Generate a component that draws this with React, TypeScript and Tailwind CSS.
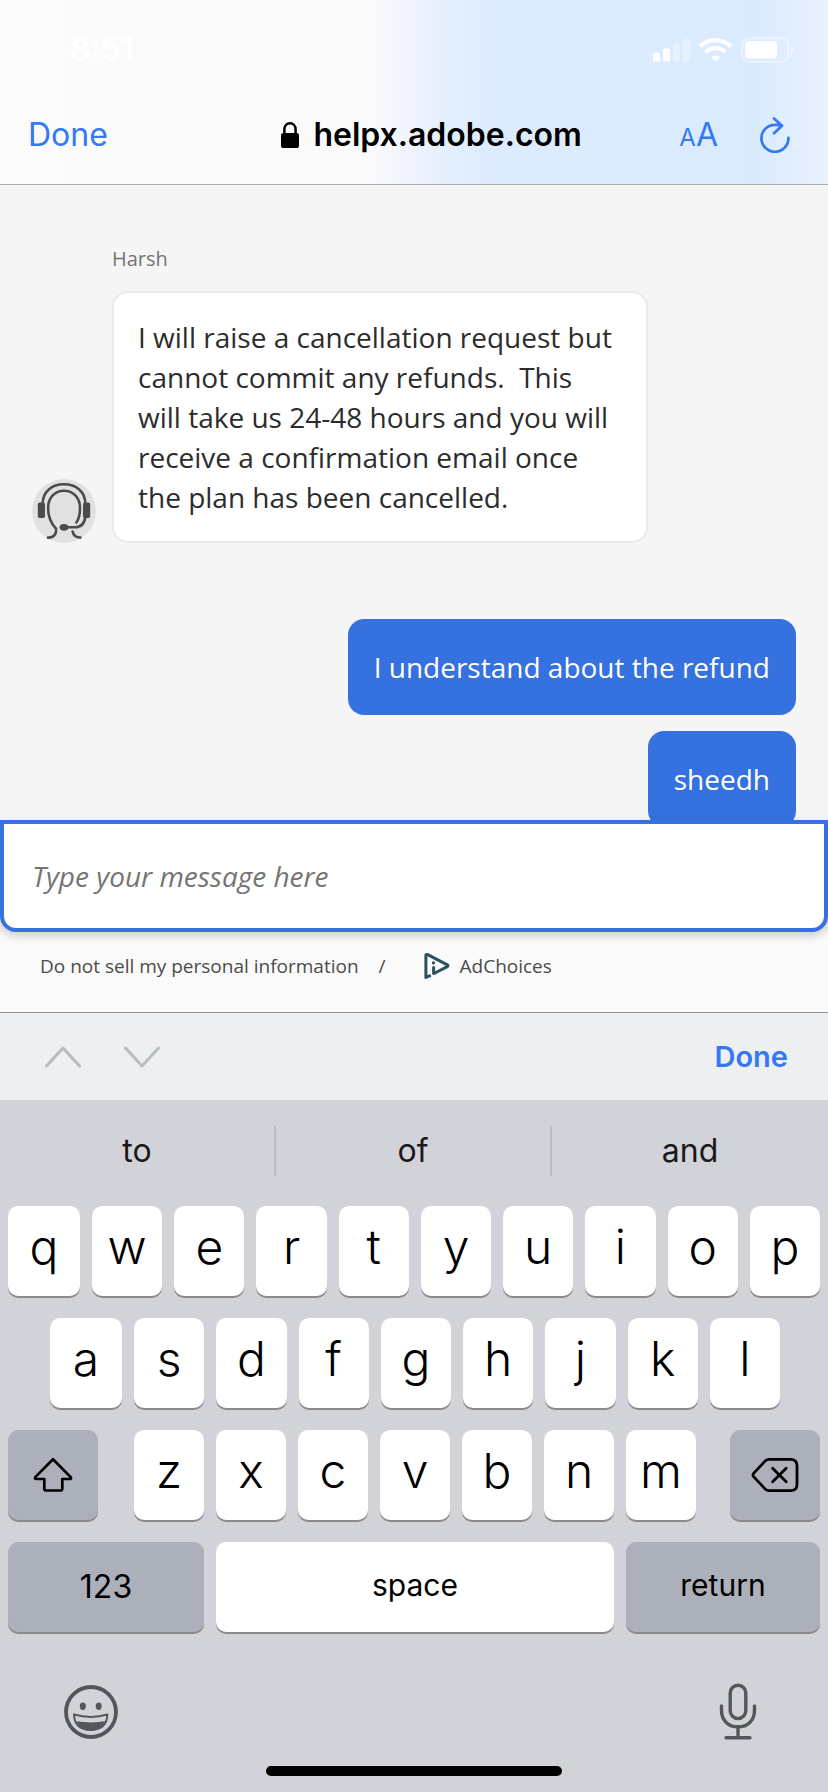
import { useState } from 'react'
import clsx from 'clsx'

// ─── Data ────────────────────────────────────────────────────

const ROW_ONE = ['q', 'w', 'e', 'r', 't', 'y', 'u', 'i', 'o', 'p']
const ROW_TWO = ['a', 's', 'd', 'f', 'g', 'h', 'j', 'k', 'l']
const ROW_THREE = ['z', 'x', 'c', 'v', 'b', 'n', 'm']
const SUGGESTIONS = ['to', 'of', 'and']
const SENT_MESSAGES = ['I understand about the refund', 'sheedh']

// ─── Icons ───────────────────────────────────────────────────

function StatusIcons() {
  return (
    <svg width="142" height="26" viewBox="0 0 142 26" fill="#fff" aria-hidden="true">
      <rect x="0" y="15.5" width="7" height="9" rx="1.6" />
      <rect x="10" y="11.5" width="7" height="13" rx="1.6" />
      <rect x="20" y="6.5" width="7" height="18" rx="1.6" opacity="0.3" />
      <rect x="30" y="1.5" width="7" height="23" rx="1.6" opacity="0.3" />
      <g fill="none" stroke="#fff" strokeWidth="4.4">
        <path d="M47.2 9.4a21.8 21.8 0 0 1 30.6 0" />
        <path d="M52.6 15.2a14 14 0 0 1 19.8 0" />
      </g>
      <path d="M62.5 24.6 58 20.2a6.6 6.6 0 0 1 9 0z" />
      <rect x="89.2" y="1.2" width="46" height="23.6" rx="6.5" fill="none" stroke="#fff" strokeWidth="2" opacity="0.45" />
      <rect x="92" y="4" width="32" height="17.5" rx="3.4" />
      <path d="M138 9.2c1.8.8 2.8 2.2 2.8 3.8s-1 3-2.8 3.8z" opacity="0.5" />
    </svg>
  )
}

function LockIcon() {
  return (
    <svg width="18" height="26" viewBox="0 0 18 26" aria-hidden="true">
      <rect x="0" y="11" width="18" height="15" rx="2.6" />
      <path d="M3.4 12V7.4C3.4 3.8 5.8 1.3 9 1.3s5.6 2.5 5.6 6.1V12" fill="none" stroke="#000" strokeWidth="2.5" />
    </svg>
  )
}

function ReloadIcon() {
  return (
    <svg width="30" height="36" viewBox="0 0 30 36" fill="none" stroke="#3478f6" strokeWidth="2.7" strokeLinecap="round" strokeLinejoin="round" aria-hidden="true">
      <path d="M21.6 8.6C19.6 7.9 17.4 7.7 14.8 7.8A13.5 13.5 0 1 0 28.4 20.8" />
      <path d="m14 1.5 8 7.2-8 7.5" />
    </svg>
  )
}

function AgentAvatar() {
  return (
    <svg className="shrink-0" width="64" height="64" viewBox="0 0 64 64" aria-label="Agent" role="img">
      <circle cx="32" cy="32" r="32" fill="#e1e1e1" />
      <g fill="none" stroke="#4b4b4b" strokeWidth="2.6" strokeLinecap="round">
        <path d="M10.6 25C10.6 12.5 20 5.3 32 5.3S53.4 12.5 53.4 25" />
        <path d="M16 58.6c6 .2 8.6-3.6 8-9-5.6-6-7.9-12.6-7.9-20.4C16.1 18.5 23 11.7 32 11.7s16 6.8 16 17.5c0 6-1 10.6-3.6 14.2" />
        <path d="M53.4 37.5c-.8 7-4.2 10.7-10.4 10.7H32" />
        <path d="M40.6 52.6c.8 4 3.4 6 7.8 6" />
      </g>
      <rect x="5.8" y="23.6" width="7.2" height="15.4" rx="1.8" fill="#4b4b4b" />
      <rect x="51" y="23.6" width="7.2" height="15.4" rx="1.8" fill="#4b4b4b" />
      <ellipse cx="32" cy="48.3" rx="4.4" ry="3.4" fill="#4b4b4b" />
    </svg>
  )
}

function AdChoicesIcon() {
  return (
    <svg width="26" height="26" viewBox="0 0 26 26" fill="none" stroke="#28535f" strokeWidth="3" strokeLinejoin="round" strokeLinecap="round" aria-hidden="true">
      <path d="M5.6 22.8 1.9 24.5V1.9q1-.8 2.4 0l19 9.9q1.4.9 0 1.8L10 20.5" />
      <path d="M9.6 14.5V20" />
      <circle cx="9.4" cy="9.9" r="1.6" fill="#28535f" stroke="none" />
    </svg>
  )
}

function ChevronIcon({ down }: { down?: boolean }) {
  return (
    <svg width="38" height="22" viewBox="0 0 38 22" fill="none" stroke="#b9bbbc" strokeWidth="3" strokeLinecap="round" strokeLinejoin="round" aria-hidden="true">
      <path d={down ? 'M2.5 2 19 20 35.5 2' : 'M2.5 20 19 2l16.5 18'} />
    </svg>
  )
}

function ShiftIcon() {
  return (
    <svg width="40" height="36" viewBox="0 0 40 36" fill="none" stroke="#000" strokeWidth="2.7" strokeLinejoin="round" aria-hidden="true">
      <path d="M20 2.2 37.7 20.1q1 1.9-1 1.9h-7.4v9.5q0 2-2 2H13.3q-2 0-2-2V22H3.5q-2.2 0-1.2-1.9z" />
    </svg>
  )
}

function BackspaceIcon() {
  return (
    <svg width="48" height="36" viewBox="0 0 48 36" fill="none" stroke="#000" strokeWidth="2.8" strokeLinecap="round" strokeLinejoin="round" aria-hidden="true">
      <path d="M18 2.3h21.5q6.5 0 6.5 6.2v19q0 6.2-6.5 6.2H18q-2.200 0-3.800-1.600L2.600 19.600q-1.300-1.600 0-3.200L14.200 3.900Q15.800 2.300 18 2.300z" />
      <path d="m21.600 11.300 13.600 13.400m0-13.400L21.600 24.700" />
    </svg>
  )
}

function SmileyIcon() {
  return (
    <svg width="54" height="54" viewBox="0 0 54 54" aria-hidden="true">
      <circle cx="27" cy="27" r="25" fill="none" stroke="#54565b" strokeWidth="3.8" />
      <ellipse cx="18.8" cy="21.2" rx="3" ry="3.7" fill="#54565b" />
      <ellipse cx="34.7" cy="21.2" rx="3" ry="3.7" fill="#54565b" />
      <path d="M10 29.5q17 4.8 33.4 0-.6 15.2-16.7 15.6Q10.6 44.7 10 29.5z" fill="none" stroke="#54565b" strokeWidth="2" strokeLinejoin="round" />
      <path d="M12.300 36.300q14.400 2.200 28.800 0-3.600 8.800-14.400 8.800T12.300 36.300z" fill="#54565b" />
    </svg>
  )
}

function MicIcon() {
  return (
    <svg width="38" height="58" viewBox="0 0 38 58" fill="none" stroke="#54565b" strokeWidth="3.4" strokeLinecap="round" aria-hidden="true">
      <rect x="11.2" y="2.2" width="15.6" height="33.4" rx="7.8" />
      <path d="M2.5 23v4.5C2.5 37.5 9.5 43.800 19 43.800s16.500-6.300 16.500-16.300V23" />
      <path d="M19 44v10.800M7 54.800h24" />
    </svg>
  )
}

// ─── Keyboard ────────────────────────────────────────────────

interface KeyProps {
  children: React.ReactNode
  className?: string
  dark?: boolean
  label?: string
  onPress?: () => void
}

function Key({ children, className, dark, label, onPress }: KeyProps) {
  return (
    <button
      type="button"
      aria-label={label}
      onClick={onPress}
      className={clsx(
        'flex h-[90px] items-center justify-center rounded-[10px] text-black shadow-[0_2px_0_#898a8e]',
        dark ? 'bg-[#abb0bb]' : 'bg-white',
        className
      )}
    >
      {children}
    </button>
  )
}

function LetterKeys({ letters, onType }: { letters: string[]; onType: (s: string) => void }) {
  return (
    <>
      {letters.map((letter) => (
        <Key key={letter} className="min-w-0 flex-1 pb-2 text-[48px] font-light" onPress={() => onType(letter)}>
          {letter}
        </Key>
      ))}
    </>
  )
}

// ─── Page ────────────────────────────────────────────────────

export default function App() {
  const [message, setMessage] = useState('')

  function type(text: string) {
    setMessage((m) => m + text)
  }

  return (
    <div className="flex h-screen flex-col bg-[#f5f5f5] font-['Inter',sans-serif]">
      <header className="border-b border-[#a9abae] bg-[linear-gradient(90deg,#fbfbfb_0%,#fafafa_44%,#eff4fe_50%,#e2effe_54%,#dcebfe_60%,#dbebfe_92%,#e8f1fe_100%)]">
        <div className="flex h-[100px] items-center justify-between pl-[70px] pr-[33px]">
          <span className="text-[32px] font-semibold text-white">8:51</span>
          <StatusIcons />
        </div>
        <div className="flex h-[84px] items-center pb-[14px] pl-7 pr-[38px]">
          <button type="button" className="text-[32px] text-[#3478f6]">
            Done
          </button>
          <div className="flex flex-1 items-center justify-center gap-[14px] pl-[76px]">
            <LockIcon />
            <span className="text-[32px] font-semibold text-black">helpx.adobe.com</span>
          </div>
          <button type="button" aria-label="Text size" className="mr-[42px] text-[#3478f6]">
            <span className="text-[24px]">A</span>
            <span className="text-[32px]">A</span>
          </button>
          <button type="button" aria-label="Reload">
            <ReloadIcon />
          </button>
        </div>
      </header>

      {/* Conversation */}
      <main className="min-h-0 flex-1 overflow-hidden px-8 pt-[58px] font-['Open_Sans',sans-serif] text-[28px] leading-10">
        <p className="mb-4 pl-20 text-[20px] leading-8 text-[#747474]">Harsh</p>
        <div className="flex items-end gap-4">
          <AgentAvatar />
          <p className="w-[536px] whitespace-pre-wrap rounded-2xl border-2 border-[#eaeaea] bg-white p-6 text-[#2c2c2c]">
            {'I will raise a cancellation request but cannot commit any refunds.  This will take us 24-48 hours and you will receive a confirmation email once the plan has been cancelled.'}
          </p>
        </div>
        <div className="mt-[76px] flex flex-col items-end gap-4">
          {SENT_MESSAGES.map((text) => (
            <p key={text} className="rounded-2xl bg-[#3571df] px-[26px] py-7 text-white">
              {text}
            </p>
          ))}
        </div>
      </main>

      <input
        type="text"
        aria-label="Message"
        placeholder="Type your message here"
        value={message}
        onChange={(e) => setMessage(e.target.value)}
        className="relative h-28 w-full shrink-0 rounded-b-2xl border-4 border-[#3571df] bg-white px-7 font-['Open_Sans',sans-serif] text-[28px] text-[#2c2c2c] shadow-[0_4px_10px_rgba(0,0,0,0.18)] outline-none placeholder:italic placeholder:text-[#747474]"
      />

      <footer className="flex h-20 shrink-0 items-center bg-[#fafafa] px-10 pb-7 pt-4 font-['Open_Sans',sans-serif] text-[19px] text-[#4b4b4b]">
        <a href="#privacy">Do not sell my personal information</a>
        <span className="ml-5 mr-[38px]">/</span>
        <a href="#adchoices" className="flex items-center gap-[10px]">
          <AdChoicesIcon />
          AdChoices
        </a>
      </footer>

      {/* Form navigation bar */}
      <div className="flex h-[88px] shrink-0 items-center border-t border-[#8f9196] bg-[#eeeff1] pl-11 pr-10">
        <button type="button" aria-label="Previous field" className="mr-[41px]">
          <ChevronIcon />
        </button>
        <button type="button" aria-label="Next field">
          <ChevronIcon down />
        </button>
        <button type="button" className="ml-auto text-[29px] font-semibold text-[#3478f6]">
          Done
        </button>
      </div>

      <section aria-label="Keyboard" className="shrink-0 bg-[#d2d3d8]">
        <div className="mb-1 grid h-[102px] grid-cols-3 items-center text-[32px] text-[#1a1a1b]">
          {SUGGESTIONS.map((word, i) => (
            <button
              key={word}
              type="button"
              className={clsx('h-[50px]', i < SUGGESTIONS.length - 1 && 'border-r-2 border-[#bbbcc2]')}
              onClick={() => type(word + ' ')}
            >
              {word}
            </button>
          ))}
        </div>

        <div className="flex flex-col gap-[22px]">
          <div className="flex gap-3 px-2 [&>:first-child]:min-w-[72px]">
            <LetterKeys letters={ROW_ONE} onType={type} />
          </div>
          <div className="flex gap-3 pl-[50px] pr-12 [&>:first-child]:min-w-[72px]">
            <LetterKeys letters={ROW_TWO} onType={type} />
          </div>
          <div className="flex px-2">
            <Key dark label="Shift" className="w-[90px]">
              <ShiftIcon />
            </Key>
            <div className="flex flex-1 gap-3 pl-9 pr-[34px]">
              <LetterKeys letters={ROW_THREE} onType={type} />
            </div>
            <Key dark label="Delete" className="w-[90px]" onPress={() => setMessage((m) => m.slice(0, -1))}>
              <BackspaceIcon />
            </Key>
          </div>
          <div className="grid grid-cols-[196fr_398fr_194fr] gap-3 px-2">
            <Key dark className="text-[32px]">
              123
            </Key>
            <Key className="pb-1 text-[30px]" onPress={() => type(' ')}>
              space
            </Key>
            <Key dark className="pb-1 text-[30px]">
              return
            </Key>
          </div>
        </div>

        <div className="flex h-[134px] items-center justify-between px-16 pt-[26px]">
          <button type="button" aria-label="Emoji">
            <SmileyIcon />
          </button>
          <button type="button" aria-label="Dictate" className="mr-[7px]">
            <MicIcon />
          </button>
        </div>
        <div className="mx-auto mb-4 h-[10px] w-[296px] rounded-full bg-black" />
      </section>
    </div>
  )
}
